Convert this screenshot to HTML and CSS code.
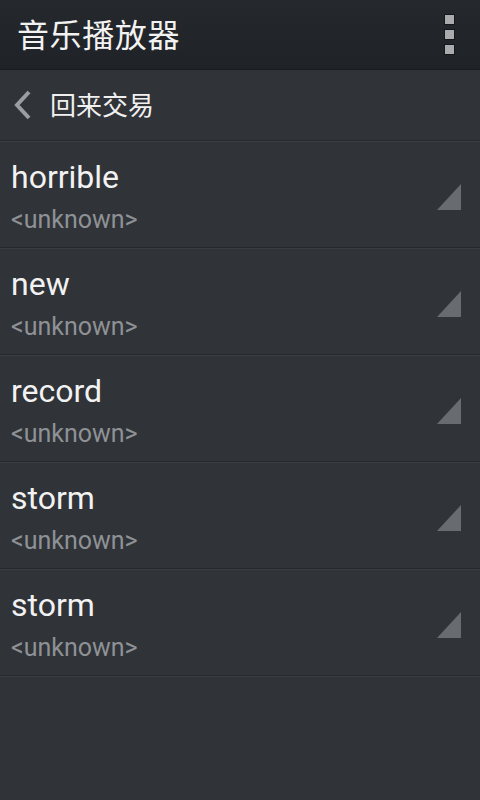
FILE: index.html
```html
<!DOCTYPE html>
<html lang="zh">
<head>
<meta charset="utf-8">
<link rel="stylesheet" href="styles.css">
</head>
<body>
<div class="app">
  <header class="topbar">
    <h1 class="title">音乐播放器</h1>
    <div class="menu" aria-label="menu">
      <span class="dot"></span><span class="dot"></span><span class="dot"></span>
    </div>
  </header>
  <nav class="backbar">
    <svg class="chev" width="22" height="32" viewBox="0 0 22 32"><polyline points="17,3 5,16 17,29" fill="none" stroke="#9a9da1" stroke-width="4"/></svg>
    <span class="back-label">回来交易</span>
  </nav>
  <ul class="list">
    <li class="row"><div class="texts"><div class="name">horrible</div><div class="artist">&lt;unknown&gt;</div></div><span class="tri"></span></li>
    <li class="row"><div class="texts"><div class="name">new</div><div class="artist">&lt;unknown&gt;</div></div><span class="tri"></span></li>
    <li class="row"><div class="texts"><div class="name">record</div><div class="artist">&lt;unknown&gt;</div></div><span class="tri"></span></li>
    <li class="row"><div class="texts"><div class="name">storm</div><div class="artist">&lt;unknown&gt;</div></div><span class="tri"></span></li>
    <li class="row"><div class="texts"><div class="name">storm</div><div class="artist">&lt;unknown&gt;</div></div><span class="tri"></span></li>
  </ul>
</div>
</body>
</html>
```
FILE: styles.css
```css
* { box-sizing: border-box; }
html, body { margin: 0; padding: 0; }
body {
  width: 480px;
  height: 800px;
  background: #303338;
  font-family: Roboto, "Noto Sans CJK SC", sans-serif;
  overflow: hidden;
}
.app { display: flex; flex-direction: column; }
.topbar {
  height: 70px;
  background: linear-gradient(#25282d, #1f2226);
  display: flex;
  align-items: center;
  justify-content: space-between;
  padding: 0 26px 0 17px;
  border-bottom: 1px solid #1a1c1f;
}
.title {
  margin: 0;
  font-weight: normal;
  font-size: 32px;
  color: #f2f2f2;
  letter-spacing: 0.6px;
  line-height: 1;
  padding-top: 2px;
}
.menu {
  display: flex;
  flex-direction: column;
  gap: 6px;
}
.dot {
  width: 9px;
  height: 9px;
  background: #a9abad;
  box-shadow: 0 0 0 1px #15171a;
}
.backbar {
  height: 71px;
  display: flex;
  align-items: center;
  padding-left: 12px;
  gap: 16px;
  border-bottom: 1px solid #26282c;
  box-shadow: 0 1px 0 #3b3e43;
  background: #303338;
}
.chev { display: block; margin-top: 0; }
.back-label {
  font-size: 26px;
  color: #f0f0f0;
  line-height: 1;
  padding-top: 2px;
}
.list { list-style: none; margin: 0; padding: 0; }
.row {
  height: 107px;
  display: flex;
  align-items: flex-start;
  justify-content: space-between;
  padding: 16px 19px 0 11px;
  border-bottom: 1px solid #26282c;
  box-shadow: 0 1px 0 #3a3d42;
}
.texts { display: flex; flex-direction: column; }
.name {
  font-size: 32px;
  color: #f2f2f2;
  line-height: 40px;
}
.artist {
  font-size: 25px;
  color: #8e9195;
  line-height: 43px;
  margin-top: 1px;
}
.tri {
  width: 0;
  height: 0;
  border-left: 24px solid transparent;
  border-bottom: 26px solid #686b70;
  margin-top: 27px;
}
```
